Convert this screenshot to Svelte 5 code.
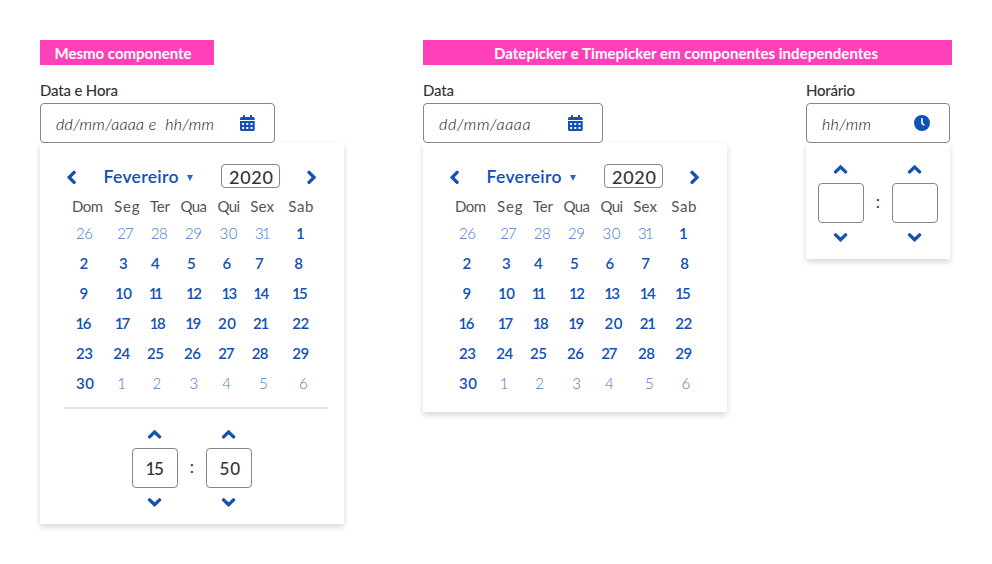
<script>
  const heads = [
    ['Dom', 72, 31], ['Seg', 114, 25.5], ['Ter', 150, 20], ['Qua', 180.5, 26.5],
    ['Qui', 217.5, 22.5], ['Sex', 250.3, 23.7], ['Sab', 288.3, 25]
  ];

  const days = [
    [26, 27, 28, 29, 30, 31, 1],
    [2, 3, 4, 5, 6, 7, 8],
    [9, 10, 11, 12, 13, 14, 15],
    [16, 17, 18, 19, 20, 21, 22],
    [23, 24, 25, 26, 27, 28, 29],
    [30, 1, 2, 3, 4, 5, 6]
  ];

  const fullStarts = [
    [76, 117.3, 150.8, 185, 219.5, 255, 296],
    [79.5, 119, 151, 187, 222.5, 255, 294.2],
    [79.5, 115, 148.7, 186, 221.5, 253.3, 292],
    [75.5, 114.7, 149.7, 185.3, 218, 253, 292.3],
    [76, 113.2, 147, 184, 218.3, 251.7, 292.3],
    [76, 117.3, 152.6, 189.6, 222.3, 259, 299]
  ];
  const dateStarts = [
    [76, 117.3, 150.8, 185, 219.5, 255, 296],
    [79.5, 119, 151, 187, 222.5, 258.2, 297.2],
    [79.5, 115, 148.7, 186, 221.3, 256.8, 292],
    [75.5, 114.7, 149.7, 185.3, 221.5, 256.7, 292.3],
    [76, 113.2, 147, 184, 218.3, 255, 292.3],
    [76, 116.7, 152.2, 189.2, 222, 262, 298.6]
  ];

  const digitWidths = { 10: 17, 11: 14.3, 12: 16, 13: 15.8, 14: 16, 15: 15.8, 16: 16, 17: 15.6, 18: 16, 19: 16, 20: 18, 21: 16.2, 27: 16.3, 30: 18, 31: 15.8 };
  const dayWidth = (d) => (d < 10 ? 0 : digitWidths[d] ?? 16.9);
  const isOther = (r, c) => (r === 0 && c < 6) || (r === 5 && c > 0);
  const span = (starts, i) => (starts[i + 1] ?? 328) - starts[i];

  // Spreads the letter spacing so that a label takes up its set width.
  function fit(node, width) {
    if (!width) return;
    const n = node.textContent.length;
    const natural = node.getBoundingClientRect().width;
    node.style.letterSpacing = `${(width - natural) / Math.max(1, n - 1)}px`;
  }
</script>

{#snippet chevron(dir)}
  <svg class="chev {dir}" viewBox="0 0 320 512" aria-hidden="true">
    <path d="M34.52 239.03L228.87 44.69c9.37-9.37 24.57-9.37 33.94 0l22.67 22.67c9.36 9.36 9.37 24.52.04 33.9L131.49 256l154.02 154.75c9.34 9.38 9.32 24.54-.04 33.9l-22.67 22.67c-9.37 9.37-24.57 9.37-33.94 0L34.52 272.97c-9.37-9.37-9.37-24.57 0-33.94z" />
  </svg>
{/snippet}

{#snippet calendarIcon()}
  <svg class="cal" viewBox="0 0 15 16" aria-hidden="true">
    <path fill-rule="evenodd" d="M0 5V3.5Q0 2 1.5 2H3V.5Q3 0 3.5 0H4.5Q5 0 5 .5V2H10V.5Q10 0 10.5 0H11.5Q12 0 12 .5V2H13.3Q14.7 2 14.7 3.5V5ZM0 6H14.7V14.5Q14.7 16 13.2 16H1.5Q0 16 0 14.5ZM2.1 8.1V10H4.1V8.1ZM6.3 8.1V10H8.3V8.1ZM10.5 8.1V10H12.5V8.1ZM2.1 12.1V14H4.1V12.1ZM6.3 12.1V14H8.3V12.1ZM10.5 12.1V14H12.5V12.1Z" />
  </svg>
{/snippet}

{#snippet calendar(starts)}
  <div class="nav">
    <button class="prev" aria-label="Anterior">{@render chevron('left')}</button>
    <span class="month"><span use:fit={75}>Fevereiro</span></span>
    <i class="caret"></i>
    <span class="year"><span use:fit={44}>2020</span></span>
    <button class="next" aria-label="Próximo">{@render chevron('right')}</button>
  </div>
  <div class="heads">
    {#each heads as [name, x, w], i}
      <span class="cell" style:width="{(heads[i + 1]?.[1] ?? 328) - x}px"><span use:fit={w}>{name}</span></span>
    {/each}
  </div>
  {#each days as week, r}
    <div class="week" style:padding-left="{starts[r][0] - 40}px">
      {#each week as d, c}
        <span class="cell" class:other={isOther(r, c)} style:width="{span(starts[r], c)}px"><span use:fit={dayWidth(d)}>{d}</span></span>
      {/each}
    </div>
  {/each}
{/snippet}

{#snippet unit(value)}
  <div class="unit">
    <button aria-label="Mais">{@render chevron('up')}</button>
    <div class="box"><span use:fit={value === '50' ? 20.5 : value ? 18.3 : 0}>{value}</span></div>
    <button aria-label="Menos">{@render chevron('down')}</button>
  </div>
{/snippet}

{#snippet time(h, m)}
  <div class="time">
    {@render unit(h)}
    <span class="colon">:</span>
    {@render unit(m)}
  </div>
{/snippet}

<main>
  <section class="same">
    <h2 class="short"><span use:fit={137}>Mesmo componente</span></h2>
    <div class="label"><span use:fit={78}>Data e Hora</span></div>
    <div class="input full"><em use:fit={158}>dd/mm/aaaa e&nbsp; hh/mm</em>{@render calendarIcon()}</div>
    <div class="panel">
      {@render calendar(fullStarts)}
      <hr />
      {@render time('15', '50')}
    </div>
  </section>

  <section class="split">
    <h2><span use:fit={384}>Datepicker e Timepicker em componentes independentes</span></h2>
    <div class="pair">
      <div class="datecol">
        <div class="label"><span use:fit={31}>Data</span></div>
        <div class="input date"><em use:fit={91.5}>dd/mm/aaaa</em>{@render calendarIcon()}</div>
        <div class="panel dateonly">{@render calendar(dateStarts)}</div>
      </div>
      <div class="timecol">
        <div class="label"><span use:fit={49}>Horário</span></div>
        <div class="input hour">
          <em use:fit={49}>hh/mm</em>
          <svg class="clock" viewBox="0 0 16 16" aria-hidden="true">
            <circle cx="8" cy="8" r="8" />
            <path d="M8 3.8V8.3L9.9 9.8" />
          </svg>
        </div>
        <div class="panel timeonly">{@render time('', '')}</div>
      </div>
    </div>
  </section>
</main>

<style>
  :global(body) { background: #fff; }
  main {
    box-sizing: border-box;
    width: 992px;
    height: 564px;
    padding: 40px;
    display: flex;
    gap: 79px;
    overflow: hidden;
    font-family: Lato, "Open Sans", sans-serif;
    color: #333;
    white-space: nowrap;
  }
  .same { width: 304px; flex: none; }
  .split { width: 529px; flex: none; }
  h2 {
    margin: 0 0 16px;
    height: 25px;
    box-sizing: border-box;
    padding-top: 2px;
    background: #ff40b9;
    color: #fff;
    font-size: 15px;
    line-height: 22px;
    font-weight: 700;
  }
  h2 span { margin-left: 71px; }
  .short { width: 174px; }
  .short span { margin-left: 14.5px; }
  .label {
    height: 22px;
    line-height: 18px;
    font-size: 15px;
    font-weight: 500;
  }
  .input {
    box-sizing: border-box;
    height: 40px;
    border: 1px solid #858585;
    border-radius: 4px;
    background: #fff;
    position: relative;
    z-index: 1;
    display: flex;
    justify-content: space-between;
    padding: 11px 19px 0 15px;
  }
  .full { width: 235px; }
  .date { width: 180px; }
  .hour { width: 144px; }
  em {
    font-size: 16px;
    font-weight: 300;
    line-height: 18px;
    color: #111;
  }
  .cal { width: 15px; height: 16px; fill: #1351b4; }
  .clock { width: 16px; height: 16px; }
  .clock circle { fill: #1351b4; }
  .clock path { fill: none; stroke: #fff; stroke-width: 1.6; stroke-linecap: round; stroke-linejoin: round; }
  .panel {
    box-sizing: border-box;
    width: 304px;
    height: 381px;
    padding-top: 21px;
    background: #fff;
    box-shadow: 0 3px 6px rgba(0, 0, 0, 0.16);
  }
  .dateonly { height: 269px; }
  .timeonly { width: 144px; height: 116px; padding-top: 18px; }
  .pair { display: flex; gap: 79px; }
  .timecol { width: 144px; }
  button {
    padding: 0;
    border: 0;
    background: none;
    display: flex;
    align-items: center;
    justify-content: center;
  }
  .chev {
    width: 9.2px;
    height: 14.7px;
    flex: none;
    overflow: visible;
    fill: #1351b4;
    stroke: #1351b4;
    stroke-width: 36;
  }
  .right { transform: rotate(180deg); }
  .up { transform: rotate(90deg); }
  .down { transform: rotate(-90deg); }
  .nav {
    height: 24px;
    display: flex;
    align-items: center;
    padding-left: 27px;
  }
  .prev, .next { width: 10px; height: 16px; margin-top: 3px; }
  .month {
    width: 83px;
    margin-left: 26.5px;
    font-size: 17.5px;
    line-height: 24px;
    font-weight: 600;
    color: #1351b4;
    padding-top: 2px;
  }
  .caret {
    border: 3px solid transparent;
    border-top: 6px solid #3065b9;
    border-bottom: 0;
    margin-top: 3px;
    width: 0;
  }
  .year {
    box-sizing: border-box;
    width: 59px;
    height: 24px;
    margin-left: 28.5px;
    padding-left: 7px;
    border: 1px solid #858585;
    border-radius: 4px;
    font-size: 18px;
    line-height: 24px;
    font-weight: 500;
  }
  .next { margin-left: 27px; }
  .heads {
    display: flex;
    height: 30px;
    padding-left: 32px;
    font-size: 15px;
    line-height: 36px;
    color: #555;
  }
  .week {
    display: flex;
    height: 30px;
    font-size: 15px;
    line-height: 30px;
    font-weight: 600;
    color: #1351b4;
  }
  .cell { flex: none; }
  .other { font-weight: 300; color: #4379cb; }
  hr {
    margin: 9px 16px 0 24px;
    height: 2px;
    border: 0;
    background: #e3e3e3;
  }
  .time { display: flex; justify-content: center; align-items: center; }
  hr + .time { margin-top: 17px; }
  .unit { width: 46px; }
  .unit button { width: 46px; height: 17px; }
  .box {
    box-sizing: border-box;
    width: 46px;
    height: 40px;
    margin: 5px 0 6px;
    border: 1px solid #858585;
    border-radius: 4px;
    padding-left: 12.5px;
    font-size: 17px;
    line-height: 39px;
    font-weight: 500;
  }
  .colon {
    width: 28px;
    padding-bottom: 4px;
    text-align: center;
    font-size: 17px;
    line-height: 20px;
  }
</style>
